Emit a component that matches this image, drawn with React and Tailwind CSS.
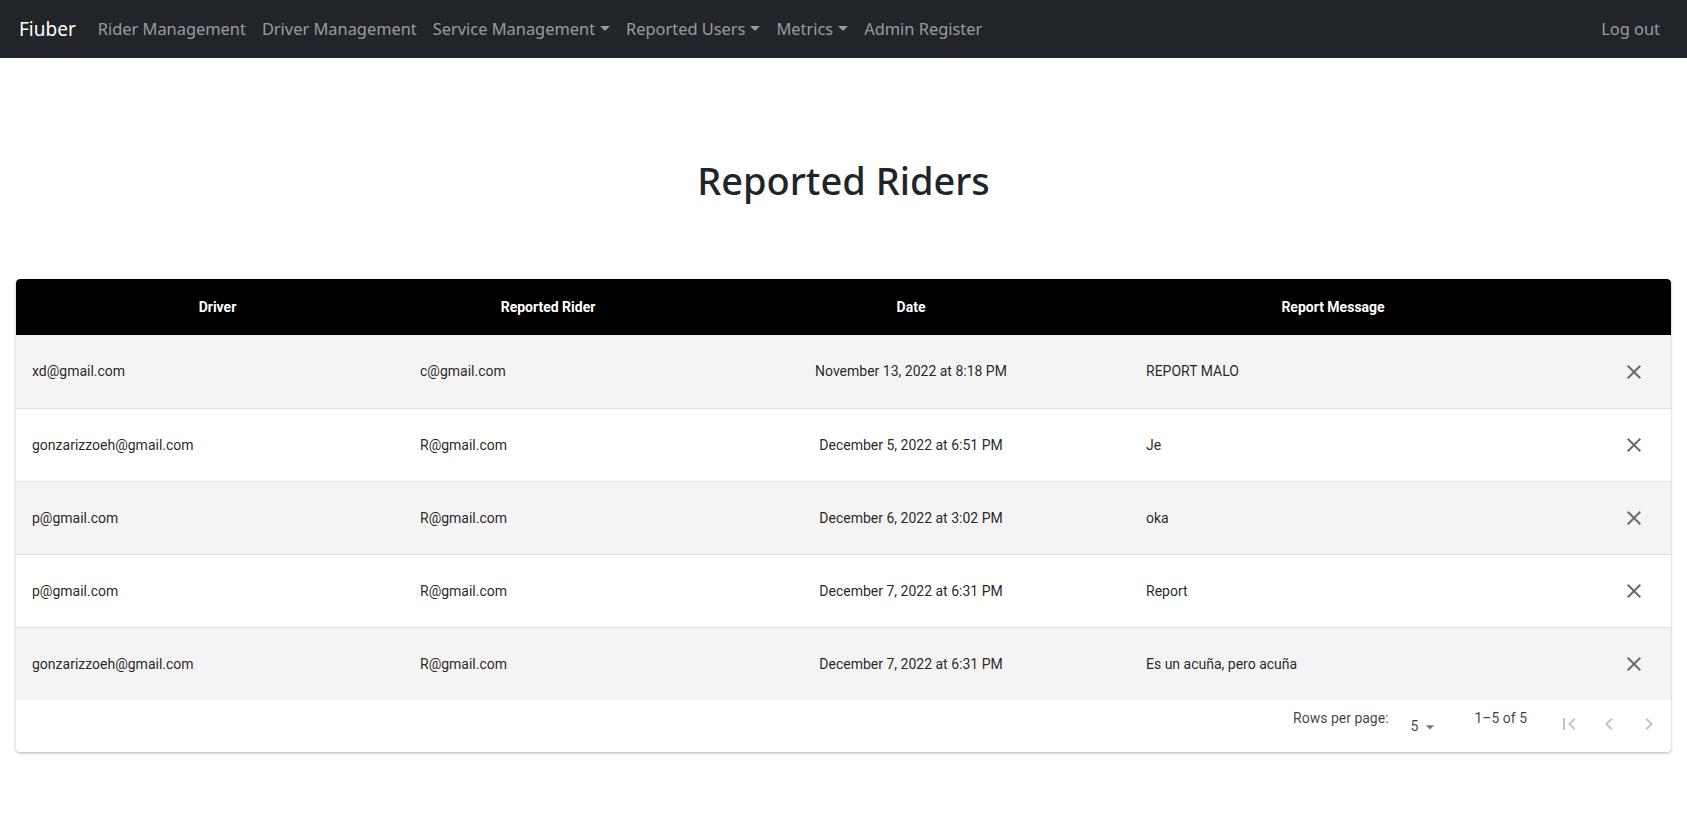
import React from "react";

const rows = [
  { driver: "xd@gmail.com", rider: "c@gmail.com", date: "November 13, 2022 at 8:18 PM", message: "REPORT MALO" },
  { driver: "gonzarizzoeh@gmail.com", rider: "R@gmail.com", date: "December 5, 2022 at 6:51 PM", message: "Je" },
  { driver: "p@gmail.com", rider: "R@gmail.com", date: "December 6, 2022 at 3:02 PM", message: "oka" },
  { driver: "p@gmail.com", rider: "R@gmail.com", date: "December 7, 2022 at 6:31 PM", message: "Report" },
  { driver: "gonzarizzoeh@gmail.com", rider: "R@gmail.com", date: "December 7, 2022 at 6:31 PM", message: "Es un acuña, pero acuña" },
];

const Caret = () => (
  <span className="ml-[5px] inline-block align-[3px] border-x-[5px] border-t-[5px] border-x-transparent border-t-current" />
);

const NavLink = ({ children, dropdown }) => (
  <a className="px-[8px] py-2 text-[rgba(255,255,255,0.55)] whitespace-nowrap flex items-center">
    {children}
    {dropdown && <Caret />}
  </a>
);

const CloseIcon = () => (
  <svg viewBox="0 0 24 24" className="w-6 h-6 fill-[#6b6b6b]">
    <path d="M19 6.41 17.59 5 12 10.59 6.41 5 5 6.41 10.59 12 5 17.59 6.41 19 12 13.41 17.59 19 19 17.59 13.41 12z" />
  </svg>
);

const grid = "grid grid-cols-[388px_288px_438px_406px_1fr]";

export default function App() {
  return (
    <div className="min-h-screen bg-white">
      <nav className="h-[58px] bg-[#212529] flex items-center justify-between pl-[12px] pr-[19px] font-['Noto_Sans',sans-serif] text-[16.4px]">
        <div className="flex items-center">
          <a className="text-white text-[19px] pl-[7px] pr-[14px]">Fiuber</a>
          <NavLink>Rider Management</NavLink>
          <NavLink>Driver Management</NavLink>
          <NavLink dropdown>Service Management</NavLink>
          <NavLink dropdown>Reported Users</NavLink>
          <NavLink dropdown>Metrics</NavLink>
          <NavLink>Admin Register</NavLink>
        </div>
        <NavLink>Log out</NavLink>
      </nav>

      <h1 className="pt-[98px] pb-[75px] text-center text-[38px] leading-[48px] font-medium text-[#212529] font-['Noto_Sans',sans-serif]">
        Reported Riders
      </h1>

      <div className="mx-4 rounded-[4px] bg-white shadow-[0_1px_3px_rgba(0,0,0,0.3)] font-['Roboto',sans-serif] overflow-hidden">
        <div className={`${grid} h-[56px] bg-black text-white text-[14px] font-bold items-center rounded-t-[4px]`}>
          <div className="text-center pl-[15px]">Driver</div>
          <div className="text-center">Reported Rider</div>
          <div className="text-center">Date</div>
          <div className="text-center">Report Message</div>
          <div />
        </div>
        {rows.map((r, i) => (
          <div
            key={i}
            className={`${grid} h-[73px] items-center text-[14px] text-[rgba(0,0,0,0.87)] ${i % 2 === 0 ? "bg-[#f4f4f4]" : "bg-white"} ${i > 0 ? "border-t border-[#e0e0e0]" : ""}`}
          >
            <div className="pl-4">{r.driver}</div>
            <div className="pl-4">{r.rider}</div>
            <div className="text-center">{r.date}</div>
            <div className="pl-4">{r.message}</div>
            <div className="flex justify-end pr-[25px]">
              <CloseIcon />
            </div>
          </div>
        ))}
        <div className="h-[52px] flex items-start justify-end text-[14px] text-[rgba(0,0,0,0.75)] pt-[9px] pr-[10px]">
          <span className="mr-[22px] mt-[-1px]">Rows per page:</span>
          <span className="flex items-center mt-[7px] mr-[34px]">
            5
            <svg viewBox="0 0 24 24" className="w-[20px] h-[20px] fill-[#777] ml-[2px]">
              <path d="M7 10l5 5 5-5z" />
            </svg>
          </span>
          <span className="mr-[30px] mt-[-1px]">1–5 of 5</span>
          <div className="flex items-center gap-[16px] mt-[3px]">
            <svg viewBox="0 0 24 24" className="w-6 h-6 fill-[#c4c4c4]">
              <path d="M18.41 16.59L13.82 12l4.59-4.59L17 6l-6 6 6 6zM6 6h2v12H6z" />
            </svg>
            <svg viewBox="0 0 24 24" className="w-6 h-6 fill-[#c4c4c4]">
              <path d="M15.41 7.41L14 6l-6 6 6 6 1.41-1.41L10.83 12z" />
            </svg>
            <svg viewBox="0 0 24 24" className="w-6 h-6 fill-[#c4c4c4]">
              <path d="M10 6L8.59 7.41 13.17 12l-4.58 4.59L10 18l6-6z" />
            </svg>
          </div>
        </div>
      </div>
    </div>
  );
}
